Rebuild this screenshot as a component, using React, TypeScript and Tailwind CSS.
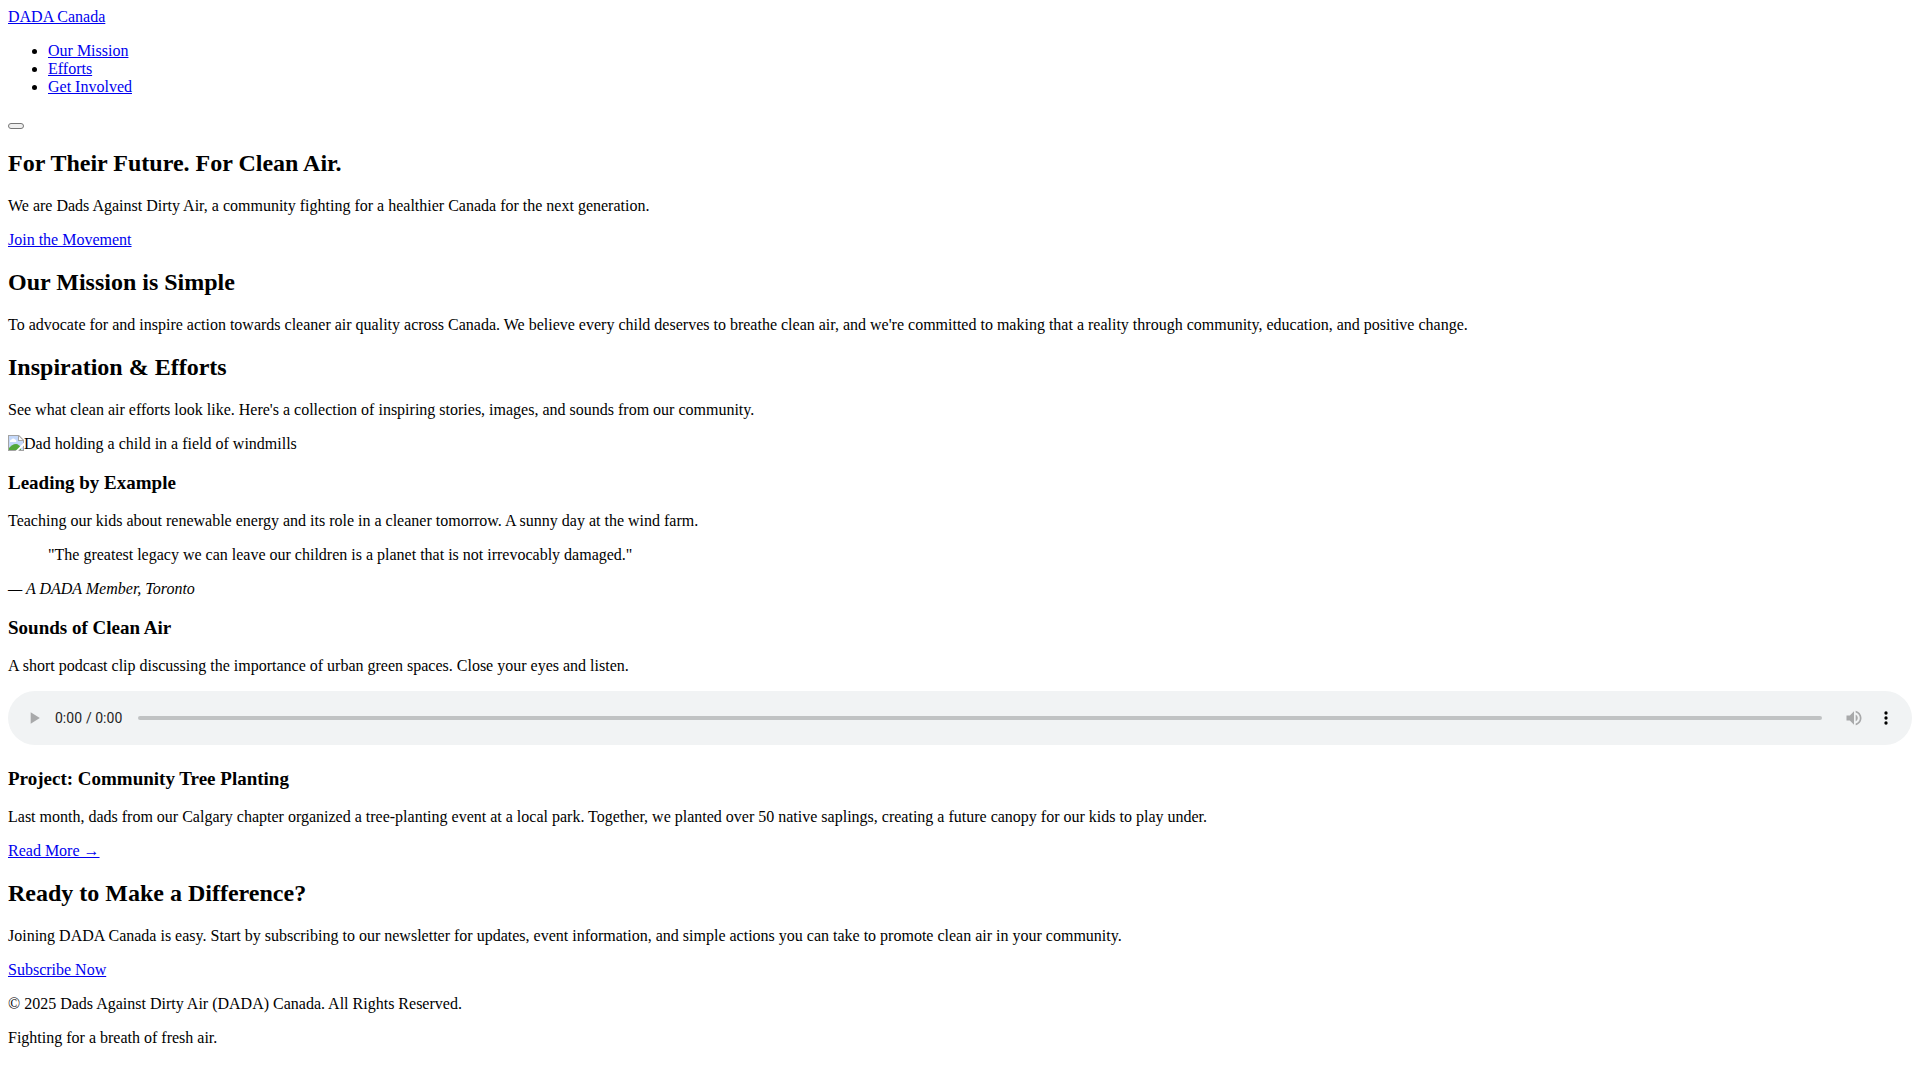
const navLinks = [
  { label: "Our Mission", href: "#mission" },
  { label: "Efforts", href: "#efforts" },
  { label: "Get Involved", href: "#involved" },
];

const link = "text-[#0000ee] underline";
const h2 = "my-5 text-2xl leading-[27px] font-bold";
const h3 = "my-[19px] text-[19px] leading-[21px] font-bold";

export default function App() {
  return (
    <div className="m-2 font-['Liberation_Serif',serif] text-base leading-[18px] text-black">
      <header>
        <a href="#" className={link}>DADA Canada</a>
        <nav>
          <ul className="my-4 list-disc pl-10">
            {navLinks.map((l) => (
              <li key={l.href}>
                <a href={l.href} className={link}>{l.label}</a>
              </li>
            ))}
          </ul>
        </nav>
        <div className="flex h-[18px] items-end pb-px">
          <button
            aria-label="Menu"
            className="h-1.5 w-4 rounded-[3px] border border-[#767676] bg-[#efefef]"
          />
        </div>
      </header>

      <main>
        <section>
          <h1 className={h2}>For Their Future. For Clean Air.</h1>
          <p className="my-4">
            We are Dads Against Dirty Air, a community fighting for a healthier Canada for the next generation.
          </p>
          <a href="#involved" className={link}>Join the Movement</a>
        </section>

        <section id="mission">
          <h2 className={h2}>Our Mission is Simple</h2>
          <p className="my-4">
            To advocate for and inspire action towards cleaner air quality across Canada. We believe every child deserves to breathe clean air, and we're committed to making that a reality through community, education, and positive change.
          </p>
        </section>

        <section id="efforts">
          <h2 className={h2}>Inspiration &amp; Efforts</h2>
          <p className="my-4">
            See what clean air efforts look like. Here's a collection of inspiring stories, images, and sounds from our community.
          </p>
          <span className="flex">
            <BrokenImage />
            Dad holding a child in a field of windmills
          </span>
          <h3 className={h3}>Leading by Example</h3>
          <p className="my-4">
            Teaching our kids about renewable energy and its role in a cleaner tomorrow. A sunny day at the wind farm.
          </p>
          <blockquote className="mx-10 my-4">
            "The greatest legacy we can leave our children is a planet that is not irrevocably damaged."
          </blockquote>
          <cite>— A DADA Member, Toronto</cite>
          <h3 className={h3}>Sounds of Clean Air</h3>
          <p className="my-4">
            A short podcast clip discussing the importance of urban green spaces. Close your eyes and listen.
          </p>
          <div className="pb-1">
            <audio controls className="h-[54px] w-full" />
          </div>
          <h3 className={h3}>Project: Community Tree Planting</h3>
          <p className="my-4">
            Last month, dads from our Calgary chapter organized a tree-planting event at a local park. Together, we planted over 50 native saplings, creating a future canopy for our kids to play under.
          </p>
          <a href="#" className={link}>Read More →</a>
        </section>

        <section id="involved">
          <h2 className={h2}>Ready to Make a Difference?</h2>
          <p className="my-4">
            Joining DADA Canada is easy. Start by subscribing to our newsletter for updates, event information, and simple actions you can take to promote clean air in your community.
          </p>
          <a href="#" className={link}>Subscribe Now</a>
        </section>
      </main>

      <footer>
        <p className="my-4">© 2025 Dads Against Dirty Air (DADA) Canada. All Rights Reserved.</p>
        <p className="my-4">Fighting for a breath of fresh air.</p>
      </footer>
    </div>
  );
}

// placeholder glyph shown next to the alt text
function BrokenImage() {
  return (
    <svg width="16" height="16" viewBox="0 0 16 16" aria-hidden="true">
      <path d="M0 0h11l5 5v11H0z" fill="#a3a3a3" />
      <path d="M1 1h9v5h5v9H1z" fill="#c4d8fa" />
      <path d="M11 1.500V5h3.500z" fill="#fff" />
      <path d="M2 6a1.500 1.500 0 0 1 1.500-1.500 2 2 0 0 1 3.500 0A1.500 1.500 0 0 1 8 7H2z" fill="#fff" />
      <path d="M1 15v-2c2-2 4-4 7-4 2 0 4 2 5 4v2z" fill="#54a83a" />
      <path d="M16 7.500L7.500 16H10l6-5.500z" fill="#fff" />
    </svg>
  );
}
